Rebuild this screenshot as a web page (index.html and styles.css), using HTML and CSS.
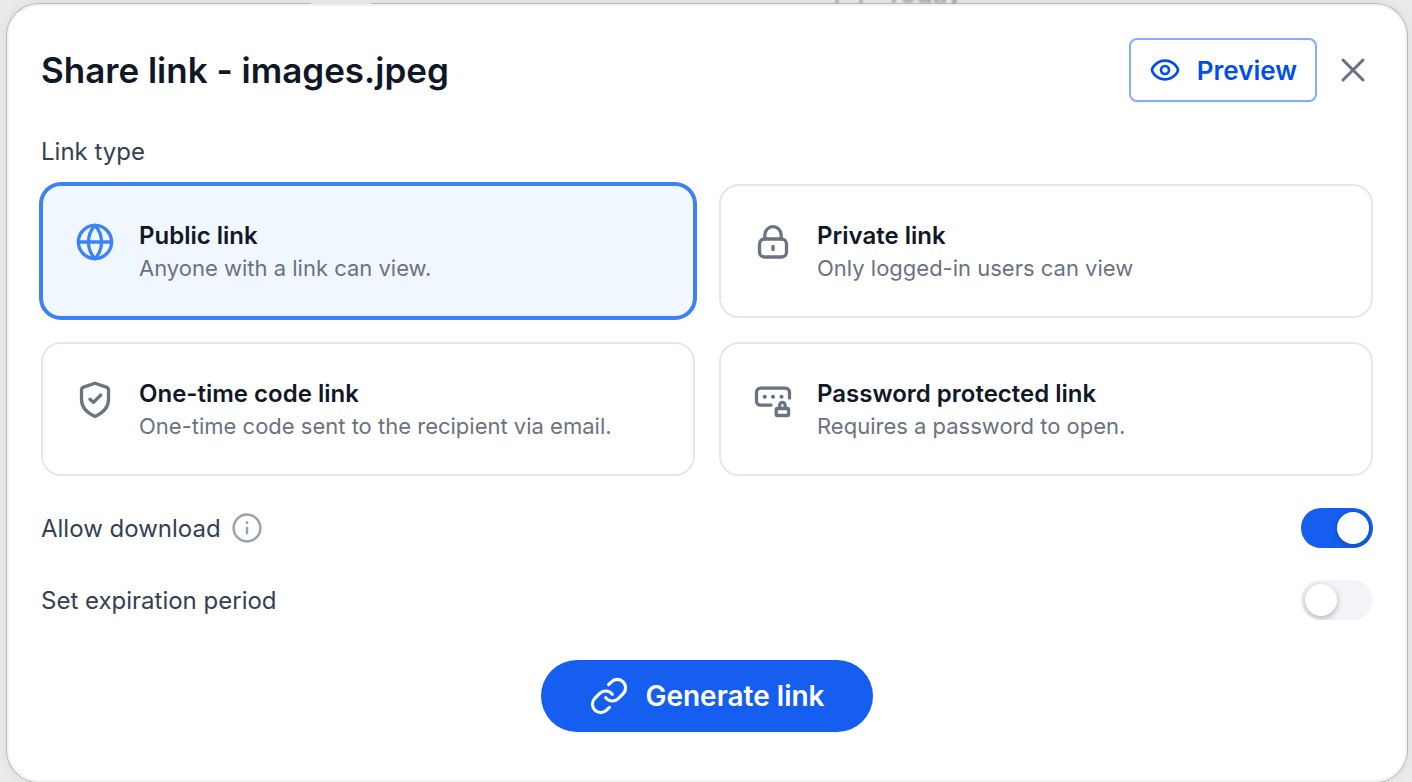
FILE: index.html
```html
<!DOCTYPE html>
<html lang="en">
<head>
  <meta charset="UTF-8">
  <meta name="viewport" content="width=device-width, initial-scale=1.0">
  <title>Share link</title>
  <link rel="stylesheet" href="styles.css">
</head>
<body>
  <div class="page-bar">
    <span class="page-chip"></span>
    <span class="page-tab">
      <svg width="32" height="32" viewBox="0 0 32 32" fill="none" stroke="currentColor" stroke-width="3"><rect x="4" y="6" width="24" height="30" rx="4"/></svg>
      Today
    </span>
  </div>

  <main class="dialog" role="dialog" aria-labelledby="dialogTitle">
    <header class="dialog-header">
      <h1 id="dialogTitle">Share link - images.jpeg</h1>
      <button type="button" class="preview-btn">
        <svg width="32" height="32" viewBox="0 0 32 32" fill="none" stroke="currentColor" stroke-width="2.7" stroke-linejoin="round">
          <path d="M3 16c0-1.700.800-2.700 2-4.200C7.500 8.800 11.200 6.600 16 6.600s8.500 2.200 11 5.200c1.200 1.500 2 2.500 2 4.200s-.8 2.700-2 4.200c-2.500 3-6.200 5.200-11 5.200s-8.500-2.200-11-5.200c-1.200-1.500-2-2.500-2-4.200z"/>
          <circle cx="16" cy="16" r="4"/>
        </svg>
        Preview
      </button>
      <button type="button" class="close-btn" aria-label="Close">
        <svg width="40" height="40" viewBox="0 0 40 40" fill="none" stroke="currentColor" stroke-width="3" stroke-linecap="round">
          <path d="M10 10l20 20M30 10L10 30"/>
        </svg>
      </button>
    </header>

    <form>
      <fieldset class="link-types">
        <legend>Link type</legend>
        <div class="card-grid">
          <label class="card">
            <input type="radio" name="linkType" value="public" checked>
            <svg class="card-icon" viewBox="0 0 40 40">
              <circle cx="20" cy="20" r="16.600"/>
              <path d="M3.300 20h33.400M20 3.300c4.200 4.600 6.500 10.500 6.500 16.700S24.200 32.100 20 36.700c-4.200-4.600-6.500-10.500-6.500-16.700S15.800 7.900 20 3.300z"/>
            </svg>
            <span class="card-text">
              <span class="card-title">Public link</span>
              <span class="card-desc">Anyone with a link can view.</span>
            </span>
          </label>
          <label class="card">
            <input type="radio" name="linkType" value="private">
            <svg class="card-icon" viewBox="0 0 40 40">
              <rect x="6.500" y="17" width="27" height="18" rx="5"/>
              <path d="M11.800 17v-4.100a8.200 8.200 0 0 1 16.400 0V17M20 24.500v3"/>
            </svg>
            <span class="card-text">
              <span class="card-title">Private link</span>
              <span class="card-desc">Only logged-in users can view</span>
            </span>
          </label>
          <label class="card">
            <input type="radio" name="linkType" value="code">
            <svg class="card-icon" viewBox="0 0 40 40">
              <path d="M20 3.200l11.400 3.900c1.300.5 2.100 1.400 2.100 2.900v9.500c0 8-5.600 13.500-13.500 17-7.900-3.500-13.500-9-13.500-17V10c0-1.500.8-2.400 2.100-2.900z"/>
              <path d="M15 19.200l3.400 3.200 7.400-7.400"/>
            </svg>
            <span class="card-text">
              <span class="card-title">One-time code link</span>
              <span class="card-desc">One-time code sent to the recipient via email.</span>
            </span>
          </label>
          <label class="card">
            <input type="radio" name="linkType" value="password">
            <svg class="card-icon" viewBox="0 0 40 40">
              <path d="M18 25.200H7.500a4 4 0 0 1-4-4v-9a4 4 0 0 1 4-4h25a4 4 0 0 1 4 4V18"/>
              <path class="dots" d="M11.700 16.700h.1M20 16.700h.1M28.500 16.700h.1"/>
              <rect x="23.200" y="28.500" width="12.400" height="7" rx="1.200"/>
              <path d="M26.700 28.500V25a2.700 2.700 0 0 1 5.400 0v3.500"/>
            </svg>
            <span class="card-text">
              <span class="card-title">Password protected link</span>
              <span class="card-desc">Requires a password to open.</span>
            </span>
          </label>
        </div>
      </fieldset>

      <div class="option-row">
        <label for="allowDownload">Allow download</label>
        <svg class="info-icon" width="32" height="32" viewBox="0 0 32 32" fill="none" stroke="currentColor" stroke-width="2.500">
          <circle cx="16" cy="16" r="13.400"/>
          <path d="M16 15v7.200M16 9.300v2.600"/>
        </svg>
        <input type="checkbox" class="toggle" id="allowDownload" checked>
      </div>
      <div class="option-row">
        <label for="setExpiration">Set expiration period</label>
        <input type="checkbox" class="toggle" id="setExpiration">
      </div>

      <button type="submit" class="generate-btn">
        <svg width="40" height="40" viewBox="0 0 24 24" fill="none" stroke="currentColor" stroke-width="1.900" stroke-linecap="round" stroke-linejoin="round">
          <path d="M10 13a5 5 0 0 0 7.540.540l3-3a5 5 0 0 0-7.070-7.070l-1.720 1.710"/>
          <path d="M14 11a5 5 0 0 0-7.540-.540l-3 3a5 5 0 0 0 7.070 7.070l1.710-1.710"/>
        </svg>
        Generate link
      </button>
    </form>
  </main>
</body>
</html>
```

FILE: styles.css
```css
* {
  box-sizing: border-box;
}

body {
  margin: 0;
  background: #ebebec;
  font-family: Inter, "Liberation Sans", sans-serif;
  color: #344054;
}

/* Page behind the dialog */
.page-bar {
  display: flex;
  align-items: flex-end;
  height: 4px;
  overflow: hidden;
  padding-left: 22%;
}

.page-chip {
  width: 60px;
  height: 4px;
  background: #e4e5e8;
}

.page-tab {
  display: flex;
  align-items: flex-end;
  gap: 20px;
  margin-left: 42%;
  font-size: 26px;
  font-weight: 600;
  line-height: 20px;
  color: #a3a5ad;
  filter: blur(1px);
}

.dialog {
  margin: 0 5px 0 7px;
  padding: 32px 32px 48px;
  border: 2px solid #f3f3f3;
  border-radius: 32px;
  background: #fff;
  box-shadow: 0 0 0 1px #b8b8b8, 0 0 16px rgba(0, 0, 0, 0.08);
}

.dialog-header {
  display: flex;
  align-items: center;
  gap: 16px;
  margin-bottom: 32px;
}

.dialog-header h1 {
  flex: 1;
  margin: 0;
  font-size: 35px;
  font-weight: 600;
  line-height: 44px;
  color: #101828;
}

button {
  display: flex;
  align-items: center;
  gap: 16px;
  font-family: inherit;
  cursor: pointer;
}

.preview-btn {
  height: 64px;
  padding: 0 18px;
  border: 2px solid #84adff;
  border-radius: 8px;
  background: #fff;
  color: #004eeb;
  font-size: 26px;
  font-weight: 600;
  box-shadow: 0 1px 2px rgba(16, 24, 40, 0.05);
}

.close-btn {
  padding: 0;
  border: none;
  background: none;
  color: #667085;
}

.link-types {
  margin: 0;
  padding: 0;
  border: none;
}

.link-types legend {
  margin-bottom: 14px;
  padding: 0;
  font-size: 24px;
  line-height: 36px;
}

.card-grid {
  display: grid;
  grid-template-columns: 1fr 1fr;
  gap: 24px;
  margin-bottom: 32px;
}

.card {
  display: flex;
  gap: 24px;
  padding: 32px 32px 34px;
  border: 2px solid #e4e7ec;
  border-radius: 20px;
  color: #6b7280;
  cursor: pointer;
}

.card:has(input:checked) {
  border-color: #3b82f6;
  background: #f0f7ff;
  box-shadow: 0 0 0 2px #3b82f6;
}

.card input {
  position: absolute;
  opacity: 0;
}

.card-icon {
  flex: none;
  width: 40px;
  height: 40px;
  margin-top: 4px;
  fill: none;
  stroke: currentColor;
  stroke-width: 3.3;
  stroke-linecap: round;
  stroke-linejoin: round;
}

.card-icon .dots {
  stroke-width: 4;
}

.card input:checked + .card-icon {
  color: #3b82f6;
}

.card-text {
  display: flex;
  flex-direction: column;
}

.card-title {
  font-size: 24px;
  font-weight: 600;
  line-height: 36px;
  color: #101828;
}

.card-desc {
  font-size: 22px;
  line-height: 28px;
}

.option-row {
  display: flex;
  align-items: center;
  gap: 10px;
  height: 40px;
  margin-bottom: 32px;
  font-size: 24px;
}

.info-icon {
  color: #98a2b3;
}

.toggle {
  display: flex;
  appearance: none;
  width: 72px;
  height: 40px;
  margin: 0 0 0 auto;
  padding: 4px;
  border-radius: 20px;
  background: #f2f4f7;
  overflow: hidden;
  cursor: pointer;
}

.toggle::before {
  content: "";
  width: 32px;
  height: 32px;
  border-radius: 50%;
  background: #fff;
  box-shadow: 0 2px 6px rgba(16, 24, 40, 0.3);
}

.toggle:checked {
  justify-content: flex-end;
  background: #155eef;
}

.generate-btn {
  height: 72px;
  margin: 40px auto 0;
  padding: 0 48px;
  border: none;
  border-radius: 36px;
  background: #155eef;
  color: #fff;
  font-size: 28px;
  font-weight: 600;
  box-shadow: 0 1px 2px rgba(16, 24, 40, 0.05);
}
```
